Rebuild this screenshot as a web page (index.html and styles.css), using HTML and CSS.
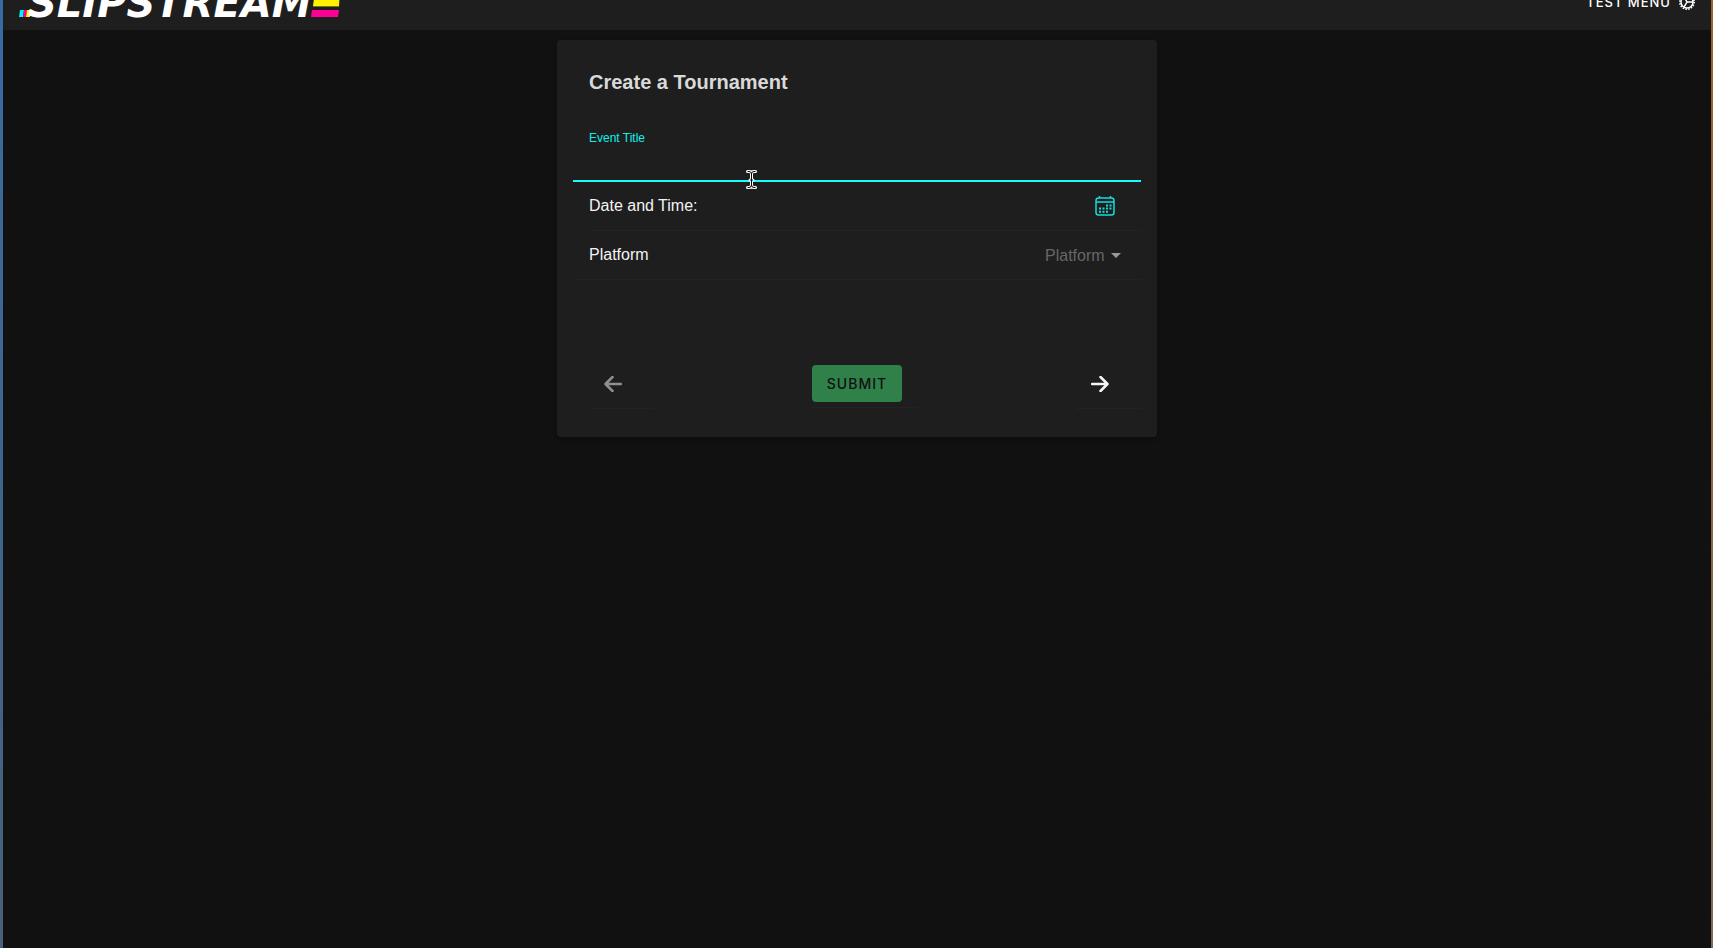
FILE: index.html
```html
<!DOCTYPE html>
<html lang="en">

<head>
  <meta charset="utf-8">
  <title>Slipstream</title>
  <link rel="stylesheet" href="styles.css">
</head>

<body>
  <header class="toolbar">
    <a class="logo" href="#">
      <svg class="logo-start" viewBox="0 0 11 7">
        <path fill="#00f0ff" d="M1 0h4L4 7H0z" />
        <path fill="#ff0096" d="M5 0h3L7 7H4z" />
        <path fill="#fff200" d="M8 0h3v7H7z" />
      </svg>
      <span>SLIPSTREAM</span>
      <svg class="logo-end" viewBox="0 0 29 26">
        <path fill="#fff200" d="M4 0h25l-1 15H2z" />
        <path fill="#77750f" d="M2 15h26v1H2z" />
        <path fill="#ff0096" d="M1 19h27l-1 7H0z" />
      </svg>
    </a>
    <button class="menu-button" type="button">
      TEST MENU
      <svg viewBox="0 0 16 16" fill="none" stroke="currentColor">
        <circle cx="8" cy="8" r="7.2" stroke-width="1.600" stroke-dasharray="1.5 1.330" />
        <circle cx="8" cy="8" r="6" stroke-width="1.500" />
        <path stroke-width="1.500" d="M8 8h6M8 8l-3 5.200M8 8L5 2.800" />
      </svg>
    </button>
  </header>

  <main>
    <form class="card">
      <h1>Create a Tournament</h1>
      <div class="field">
        <label for="title">Event Title</label>
        <input id="title" type="text" autocomplete="off">
        <svg class="cursor" viewBox="0 0 11 19" fill="none">
          <path stroke="#fff" stroke-width="3" stroke-linecap="round" d="M1.5 1.5h1.500q2.500 0 2.500 2.500v11q0 2.500-2.500 2.500H1.500M9.500 1.500H8q-2.500 0-2.500 2.500v11q0 2.500 2.500 2.500h1.500M4 10h3" />
          <path stroke="#000" d="M1.500 1.500H3q2.500 0 2.500 2.500v11q0 2.500-2.500 2.500H1.500M9.500 1.500H8q-2.500 0-2.500 2.500v11q0 2.500 2.500 2.500h1.500M4 10h3" />
        </svg>
      </div>
      <div class="row">
        <span>Date and Time:</span>
        <button class="icon-button calendar" type="button" aria-label="Pick date and time">
          <svg viewBox="0 0 20 20" fill="none" stroke="currentColor">
            <rect x="1" y="2" width="18" height="17" rx="2.500" stroke-width="1.500" />
            <path stroke-width="1.500" d="M4.500 0v2M15.500 0v2M1 6h18" />
            <path stroke-width="2" d="M11 9.500h2M14.500 9.500h2M4 12.500h2M7.500 12.500h2M11 12.500h2M14.500 12.500h2M4 15.800h2M7.500 15.800h2M11 15.800h2" />
          </svg>
        </button>
      </div>
      <div class="row row-full">
        <label for="platform">Platform</label>
        <span class="select">
          <select id="platform">
            <option>Platform</option>
          </select>
          <svg viewBox="0 0 10 5"><path fill="currentColor" d="M0 0h10L5 5z" /></svg>
        </span>
      </div>
      <div class="actions">
        <div class="step">
          <button class="icon-button" type="button" aria-label="Back" disabled>
            <svg viewBox="0 0 18 16"><path d="M8.500 1L1.500 8l7 7M2 8h15" /></svg>
          </button>
        </div>
        <div class="submit">
          <button type="submit" disabled>SUBMIT</button>
        </div>
        <div class="step">
          <button class="icon-button" type="button" aria-label="Next">
            <svg viewBox="0 0 18 16"><path d="M9.500 1l7 7-7 7M16 8H1" /></svg>
          </button>
        </div>
      </div>
    </form>
  </main>
</body>

</html>
```
FILE: styles.css
```css
* {
  box-sizing: border-box;
}

body {
  margin: 0;
  min-height: 100vh;
  padding: 0 2px 0 3px;
  background:
    linear-gradient(#376ba3, #48607a) left / 3px 100% no-repeat,
    linear-gradient(#98622d, #806a50) right / 2px 100% no-repeat,
    #111;
  color: #f4f4f4;
  font-family: "Liberation Sans", Arial, sans-serif;
  font-size: 16px;
}

button,
input,
select {
  margin: 0;
  padding: 0;
  border: none;
  outline: none;
  background: none;
  color: inherit;
  font: inherit;
}

svg {
  display: block;
}

.toolbar {
  display: flex;
  justify-content: space-between;
  align-items: flex-end;
  height: 30px;
  padding: 0 16px;
  overflow: hidden;
  background: #1e1e1e;
}

.logo {
  display: flex;
  align-items: flex-end;
  padding-bottom: 13px;
  color: #fff;
  text-decoration: none;
}

.logo span {
  height: 34px;
  margin-left: -2px;
  font: italic bold 40px/40px "DejaVu Sans", sans-serif;
}

.logo-start {
  width: 11px;
  height: 7px;
}

.logo-end {
  width: 29px;
  height: 26px;
}

.menu-button {
  display: flex;
  align-items: center;
  gap: 8px;
  padding-bottom: 20px;
  color: #fff;
  font-family: Inter, sans-serif;
  font-size: 13px;
  font-weight: 500;
  line-height: 16px;
  letter-spacing: 1px;
}

.menu-button svg {
  width: 16px;
  height: 16px;
}

.card {
  max-width: 600px;
  margin: 10px auto;
  padding: 28px 16px;
  border-radius: 4px;
  background: #1e1e1e;
  box-shadow: 0 2px 4px rgba(0, 0, 0, 0.3);
}

h1 {
  margin: 0 16px 34px;
  color: #d9d9d9;
  font-size: 20px;
  line-height: 28px;
}

.field {
  position: relative;
  padding: 0 16px;
  border-bottom: 2px solid #1ff;
}

.field label {
  display: block;
  color: #1ee;
  font-size: 12px;
  line-height: 16px;
}

.field input {
  display: block;
  width: 100%;
  height: 34px;
}

.cursor {
  position: absolute;
  left: 173px;
  bottom: -9px;
  width: 11px;
  height: 19px;
}

.row {
  display: flex;
  justify-content: space-between;
  align-items: center;
  height: 49px;
  margin-left: 16px;
  padding-right: 20px;
  border-bottom: 1px solid #232323;
}

.row-full {
  margin-left: 0;
  padding-left: 16px;
}

.calendar {
  padding: 0 6px;
  color: #1dd;
}

.calendar svg {
  width: 20px;
  height: 20px;
}

.select {
  display: flex;
  align-items: center;
  gap: 6px;
  color: #999;
}

.select select {
  appearance: none;
  color: #666;
}

.select svg {
  width: 10px;
  height: 5px;
}

.actions {
  display: flex;
  justify-content: space-between;
  align-items: flex-start;
  margin-top: 85px;
  padding-left: 16px;
}

.step {
  width: 65px;
  padding: 0 15px;
  border-bottom: 1px solid #232323;
}

.step .icon-button {
  height: 43px;
  padding-bottom: 6px;
}

.step button:disabled {
  color: #8f8f8f;
}

.step svg {
  width: 18px;
  height: 16px;
  fill: none;
  stroke: currentColor;
  stroke-width: 2.5;
  stroke-linecap: round;
  stroke-linejoin: round;
}

.submit {
  padding: 0 16px 5px 0;
  border-bottom: 1px solid #232323;
}

.submit button {
  height: 37px;
  padding: 0 15px;
  border-radius: 4px;
  background: #2f8049;
  color: #111;
  font-family: Inter, sans-serif;
  font-size: 14px;
  font-weight: 500;
  letter-spacing: 1px;
}
```
